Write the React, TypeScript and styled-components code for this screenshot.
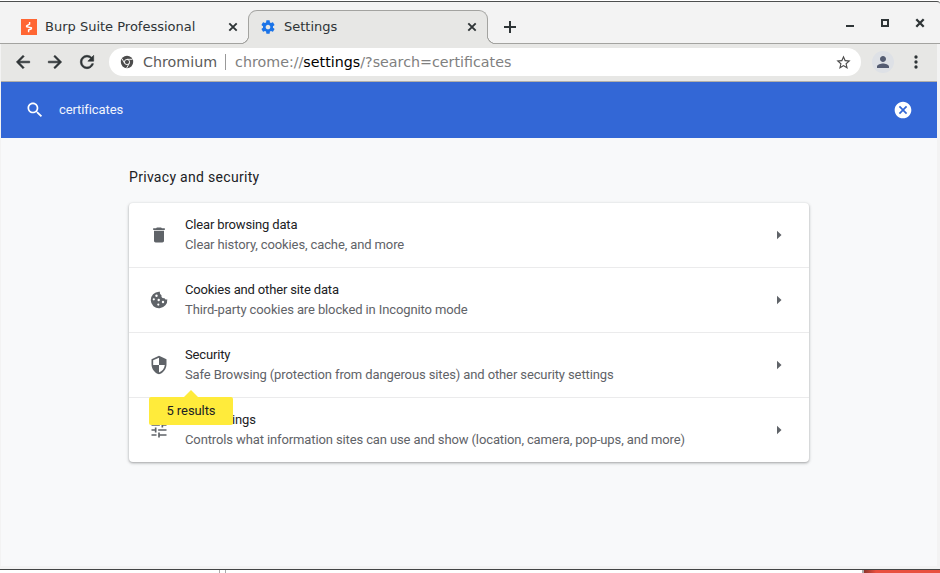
import React from 'react';
import styled, { createGlobalStyle } from 'styled-components';

const GlobalStyle = createGlobalStyle`
  * { box-sizing: border-box; }
  body { margin: 0; background: #fff; overflow: hidden; }
`;

const chrome = '#e7e7e5';
const strip = '#f3f3f3';
const line = '#a3a3a0';

const Desktop = styled.div`
  width: 940px;
  height: 573px;
  padding-top: 1px;
  display: flex;
  flex-direction: column;
  background: #fff;
`;

const BrowserWindow = styled.div`
  height: 569px;
  display: flex;
  flex-direction: column;
  background: ${strip};
  border-top: 1px solid #4d4f4f;
  border-bottom: 1px solid #434545;
  border-radius: 0 3px 0 0;
`;

const TabStrip = styled.div`
  height: 42px;
  flex: none;
  display: flex;
  align-items: flex-end;
  border-bottom: 1px solid ${line};
  padding-left: 1px;
`;

const Tab = styled.div<{ $active?: boolean }>`
  position: relative;
  height: 34px;
  width: ${p => (p.$active ? 240 : 247)}px;
  margin-bottom: -1px;
  padding: 0 7px ${p => (p.$active ? '1px 11px' : '0 20px')};
  display: flex;
  align-items: center;
  font: 13px/16px 'DejaVu Sans', sans-serif;
  color: #2e3436;
  background: ${p => (p.$active ? chrome : 'transparent')};
  border: ${p => (p.$active ? `1px solid ${line}` : '0')};
  border-bottom: 0;
  border-radius: 9px 9px 0 0;

  &::before, &::after {
    content: '';
    display: ${p => (p.$active ? 'block' : 'none')};
    position: absolute;
    bottom: 0;
    width: 9px;
    height: 9px;
  }
  &::before {
    left: -9px;
    background: radial-gradient(circle at 0 0, ${strip} 8px, ${line} 8.4px 9px, ${chrome} 9.5px);
  }
  &::after {
    right: -9px;
    background: radial-gradient(circle at 100% 0, ${strip} 8px, ${line} 8.4px 9px, ${chrome} 9.5px);
  }
`;

const TabTitle = styled.span`
  flex: 1;
  margin-left: 8px;
  white-space: nowrap;
`;

const Glyph = styled.svg<{ $size: number }>`
  display: block;
  flex: none;
  width: ${p => p.$size}px;
  height: ${p => p.$size}px;
  fill: currentColor;
`;

const NewTab = styled.div`
  height: 34px;
  width: 44px;
  margin-bottom: -1px;
  display: flex;
  align-items: center;
  justify-content: center;
  color: #2e3436;
`;

const WindowButtons = styled.div`
  margin-left: auto;
  align-self: flex-start;
  display: flex;
  gap: 19px;
  padding: 13px 12px 0 0;
  color: #2e3436;
`;

const Toolbar = styled.div`
  height: 38px;
  flex: none;
  margin: 0 3px 0 1px;
  padding: 0 11px 1px 12px;
  display: flex;
  align-items: center;
  background: ${chrome};
  border-bottom: 1px solid #b2afa9;
  color: #2e3436;
`;

const NavButtons = styled.div`
  display: flex;
  gap: 12px;
  stroke: currentColor;
  stroke-width: 0.7px;
`;

const AddressBar = styled.div`
  width: 752px;
  height: 28px;
  margin-left: 12px;
  padding: 0 9px 0 11px;
  display: flex;
  align-items: center;
  border-radius: 14px;
  background: #fff;
  color: #4c4c4c;
  font: 14.27px/20px 'DejaVu Sans', sans-serif;
`;

const Origin = styled.span`
  margin-left: 9px;
  padding-right: 8px;
  color: #5a5a5a;
`;

const Divider = styled.span`
  width: 1px;
  height: 16px;
  background: #999;
`;

const Url = styled.span`
  flex: 1;
  margin-left: 9px;
  white-space: nowrap;
  color: #808080;
  b { font-weight: 400; color: #000; }
`;

const Avatar = styled.div`
  width: 22px;
  height: 22px;
  margin-left: 11px;
  margin-right: 12px;
  border-radius: 50%;
  background: #dee1e6;
  display: flex;
  align-items: center;
  justify-content: center;
  color: #545c72;
`;

const SearchBar = styled.div`
  height: 56px;
  flex: none;
  margin: 0 3px 0 1px;
  padding: 0 24px;
  display: flex;
  align-items: center;
  background: #3367d6;
  color: #fff;
  font: 13px/20px Roboto, sans-serif;
`;

const Query = styled.span`
  flex: 1;
  margin-left: 14px;
  letter-spacing: -0.1px;
  color: #f0f4fc;
`;

const Page = styled.main`
  flex: 1;
  margin: 0 3px 3px 1px;
  padding: 29px 128px 0;
  background: #f8f9fa;
  font: 13px/20px Roboto, sans-serif;
`;

const Heading = styled.h2`
  margin: 0 0 16px;
  font-size: 14px;
  line-height: 20px;
  font-weight: 400;
  letter-spacing: 0.3px;
  color: #202124;
`;

const Card = styled.section`
  width: 680px;
  border-radius: 4px;
  background: #fff;
  box-shadow: 0 1px 2px rgba(60, 64, 67, 0.3), 0 1px 3px 1px rgba(60, 64, 67, 0.15);
`;

const Row = styled.div`
  position: relative;
  height: 65px;
  padding: 0 20px;
  display: flex;
  align-items: center;
  color: #5f6368;
  & + & { border-top: 1px solid #ebebec; }
  &:first-child { height: 64px; }
`;

const RowText = styled.div`
  flex: 1;
  margin-left: 16px;
  white-space: nowrap;
`;

const RowTitle = styled.div`
  letter-spacing: -0.155px;
  color: #202124;
`;

const RowDetail = styled.div`
  letter-spacing: -0.117px;
`;

const Bubble = styled.div`
  position: absolute;
  z-index: 1;
  left: 20px;
  top: 64px;
  width: 84px;
  height: 28px;
  border-radius: 2px;
  background: #ffeb3b;
  color: #202124;
  text-align: center;
  line-height: 28px;
  letter-spacing: -0.08px;
  &::before {
    content: '';
    position: absolute;
    left: 35px;
    top: -7px;
    border: 7px solid transparent;
    border-top: 0;
    border-bottom-color: #ffeb3b;
  }
`;

const Behind = styled.div`
  flex: 1;
  display: flex;
  padding-left: 219px;
`;

const BehindEdge = styled.div`
  width: 7px;
  border: solid #aaa;
  border-width: 0 1px;
`;

const BehindAlert = styled.div`
  margin-left: auto;
  width: 78px;
  border-left: 2px solid #aaa;
  background: linear-gradient(90deg, #8c352c, #e8503f 12px);
`;

const paths = {
  back: 'M20 11H7.83l5.59-5.59L12 4l-8 8 8 8 1.41-1.41L7.83 13H20v-2z',
  forward: 'M12 4l-1.41 1.41L16.17 11H4v2h12.17l-5.58 5.59L12 20l8-8z',
  reload:
    'M17.65 6.35C16.2 4.9 14.21 4 12 4c-4.42 0-7.99 3.58-7.99 8s3.57 8 7.99 8c3.73 0 6.84-2.55 7.73-6h-2.08c-.82 2.33-3.04 4-5.65 4-3.31 0-6-2.69-6-6s2.69-6 6-6c1.66 0 3.14.69 4.22 1.78L13 11h7V4l-2.35 2.35z',
  gear:
    'M19.43 12.98c.04-.32.07-.64.07-.98s-.03-.66-.07-.98l2.11-1.65c.19-.15.24-.42.12-.64l-2-3.46c-.12-.22-.39-.3-.61-.22l-2.49 1c-.52-.4-1.08-.73-1.69-.98l-.38-2.65C14.46 2.18 14.25 2 14 2h-4c-.25 0-.46.18-.49.42l-.38 2.65c-.61.25-1.17.59-1.69.98l-2.49-1c-.23-.09-.49 0-.61.22l-2 3.46c-.13.22-.07.49.12.64l2.11 1.65c-.04.32-.07.65-.07.98s.03.66.07.98l-2.11 1.65c-.19.15-.24.42-.12.64l2 3.46c.12.22.39.3.61.22l2.49-1c.52.4 1.08.73 1.69.98l.38 2.65c.03.24.24.42.49.42h4c.25 0 .46-.18.49-.42l.38-2.65c.61-.25 1.17-.59 1.69-.98l2.49 1c.23.09.49 0 .61-.22l2-3.46c.12-.22.07-.49-.12-.64l-2.11-1.65zM12 15.5c-1.93 0-3.5-1.57-3.5-3.5s1.57-3.5 3.5-3.5 3.5 1.57 3.5 3.5-1.57 3.5-3.5 3.5z',
  star:
    'M22 9.24l-7.19-.62L12 2 9.19 8.63 2 9.24l5.46 4.73L5.82 21 12 17.27 18.18 21l-1.63-7.03L22 9.24zM12 15.4l-3.76 2.27 1-4.28-3.32-2.88 4.38-.38L12 6.1l1.71 4.04 4.38.38-3.32 2.88 1 4.28L12 15.4z',
  person: 'M12 12c2.21 0 4-1.79 4-4s-1.79-4-4-4-4 1.79-4 4 1.79 4 4 4zm0 2c-2.67 0-8 1.34-8 4v2h16v-2c0-2.66-5.33-4-8-4z',
  more: 'M12 8a2 2 0 1 0 0-4 2 2 0 0 0 0 4zm0 6a2 2 0 1 0 0-4 2 2 0 0 0 0 4zm0 6a2 2 0 1 0 0-4 2 2 0 0 0 0 4z',
  search:
    'M15.5 14h-.79l-.28-.27C15.41 12.59 16 11.11 16 9.5 16 5.91 13.09 3 9.5 3S3 5.91 3 9.5 5.91 16 9.5 16c1.61 0 3.09-.59 4.23-1.57l.27.28v.79l5 4.99L20.49 19l-4.99-5zm-6 0C7.01 14 5 11.99 5 9.5S7.01 5 9.5 5 14 7.01 14 9.5 11.99 14 9.5 14z',
  cancel:
    'M12 2C6.47 2 2 6.47 2 12s4.47 10 10 10 10-4.47 10-10S17.53 2 12 2zm5 13.59L15.59 17 12 13.41 8.41 17 7 15.59 10.59 12 7 8.41 8.41 7 12 10.59 15.59 7 17 8.41 13.41 12 17 15.59z',
  trash: 'M6 19c0 1.1.9 2 2 2h8c1.1 0 2-.9 2-2V7H6v12zM19 4h-3.5l-1-1h-5l-1 1H5v2h14V4z',
  shield:
    'M12 1L3 5v6c0 5.55 3.84 10.74 9 12 5.16-1.26 9-6.45 9-12V5l-9-4zm0 10.99h7c-.53 4.12-3.28 7.79-7 8.94V12H5V6.3l7-3.11v8.8z',
  tune: 'M3 17v2h6v-2H3zM3 5v2h10V5H3zm10 16v-2h8v-2h-8v-2h-2v6h2zM7 9v2H3v2h4v2h2V9H7zm14 4v-2H11v2h10zm-6-4h2V7h4V5h-4V3h-2v6z',
  arrow: 'M9.6 7l5.4 5-5.4 5z',
};

function Icon({ name, size = 20 }: { name: keyof typeof paths; size?: number }) {
  return (
    <Glyph $size={size} viewBox="0 0 24 24">
      <path d={paths[name]} />
    </Glyph>
  );
}

const BlueIcon = styled.span`
  color: #1a73e8;
`;

function CloseIcon({ width = 1.9 }: { width?: number }) {
  return (
    <Glyph $size={16} viewBox="0 0 16 16">
      <path d="M4.3 4.3L11.7 11.7M11.7 4.3L4.3 11.7" stroke="currentColor" strokeWidth={width} fill="none" />
    </Glyph>
  );
}

function BurpLogo() {
  return (
    <Glyph $size={16} viewBox="0 0 16 16">
      <rect width="16" height="16" fill="#ff6633" />
      <path d="M8.600 3V5.200L5.600 6.800V7.700L10.400 8.800V9.700L7.600 11V13.200" fill="none" stroke="#fff" strokeWidth="1.4" />
    </Glyph>
  );
}

function ChromiumIcon() {
  return (
    <Glyph $size={14} viewBox="0 0 14 14">
      <circle cx="7" cy="7" r="6.2" />
      <circle cx="7" cy="7" r="2.6" fill="none" stroke="#fff" strokeWidth=".9" />
      <path d="M7 4.3H12.5M4.7 8.4L1.9 3.6M9.3 8.4L6.6 13.1" stroke="#fff" strokeWidth=".9" />
    </Glyph>
  );
}

function CookieIcon() {
  return (
    <Glyph $size={20} viewBox="0 0 20 20">
      <path d="M10 1.7A8.3 8.3 0 1 0 18.3 9.2C17.2 9.9 15.7 9.3 15.3 8C13.5 8.6 11.9 7 12.5 5.2C11.2 4.6 10.5 3.2 11 1.8Z" />
      <g fill="#fff">
        <circle cx="7.5" cy="5.7" r="1.2" />
        <circle cx="4.8" cy="9.3" r="1.1" />
        <circle cx="9.7" cy="10" r="1.2" />
        <circle cx="9.3" cy="14.6" r="1.1" />
        <circle cx="14" cy="12" r="1.2" />
      </g>
    </Glyph>
  );
}

interface Entry {
  icon: React.ReactNode;
  title: string;
  detail: string;
  bubble?: string;
}

const entries: Entry[] = [
  { icon: <Icon name="trash" />, title: 'Clear browsing data', detail: 'Clear history, cookies, cache, and more' },
  { icon: <CookieIcon />, title: 'Cookies and other site data', detail: 'Third-party cookies are blocked in Incognito mode' },
  {
    icon: <Icon name="shield" />,
    title: 'Security',
    detail: 'Safe Browsing (protection from dangerous sites) and other security settings',
    bubble: '5 results',
  },
  {
    icon: <Icon name="tune" />,
    title: 'Site Settings',
    detail: 'Controls what information sites can use and show (location, camera, pop-ups, and more)',
  },
];

export default function App() {
  return (
    <Desktop>
      <GlobalStyle />
      <BrowserWindow>
        <TabStrip>
          <Tab>
            <BurpLogo />
            <TabTitle>Burp Suite Professional</TabTitle>
            <CloseIcon />
          </Tab>
          <Tab $active>
            <BlueIcon><Icon name="gear" size={16} /></BlueIcon>
            <TabTitle>Settings</TabTitle>
            <CloseIcon />
          </Tab>
          <NewTab>
            <Glyph $size={16} viewBox="0 0 16 16">
              <path d="M8 2v12M2 8h12" stroke="currentColor" strokeWidth="2" />
            </Glyph>
          </NewTab>
          <WindowButtons>
            <Glyph $size={16} viewBox="0 0 16 16"><path d="M4 10h8v2H4z" /></Glyph>
            <Glyph $size={16} viewBox="0 0 16 16"><path d="M4 4h8v8H4zM6 6v4h4V6z" fillRule="evenodd" /></Glyph>
            <CloseIcon width={2.3} />
          </WindowButtons>
        </TabStrip>
        <Toolbar>
          <NavButtons>
            <Icon name="back" />
            <Icon name="forward" />
            <Icon name="reload" />
          </NavButtons>
          <AddressBar>
            <ChromiumIcon />
            <Origin>Chromium</Origin>
            <Divider />
            <Url>chrome://<b>settings</b>/?search=certificates</Url>
            <Icon name="star" size={17} />
          </AddressBar>
          <Avatar><Icon name="person" size={18} /></Avatar>
          <Icon name="more" />
        </Toolbar>
        <SearchBar>
          <Icon name="search" />
          <Query>certificates</Query>
          <Icon name="cancel" />
        </SearchBar>
        <Page>
          <Heading>Privacy and security</Heading>
          <Card>
            {entries.map(e => (
              <Row key={e.title}>
                {e.icon}
                <RowText>
                  <RowTitle>{e.title}</RowTitle>
                  <RowDetail>{e.detail}</RowDetail>
                </RowText>
                <Icon name="arrow" />
                {e.bubble && <Bubble>{e.bubble}</Bubble>}
              </Row>
            ))}
          </Card>
        </Page>
      </BrowserWindow>
      <Behind>
        <BehindEdge />
        <BehindAlert />
      </Behind>
    </Desktop>
  );
}
